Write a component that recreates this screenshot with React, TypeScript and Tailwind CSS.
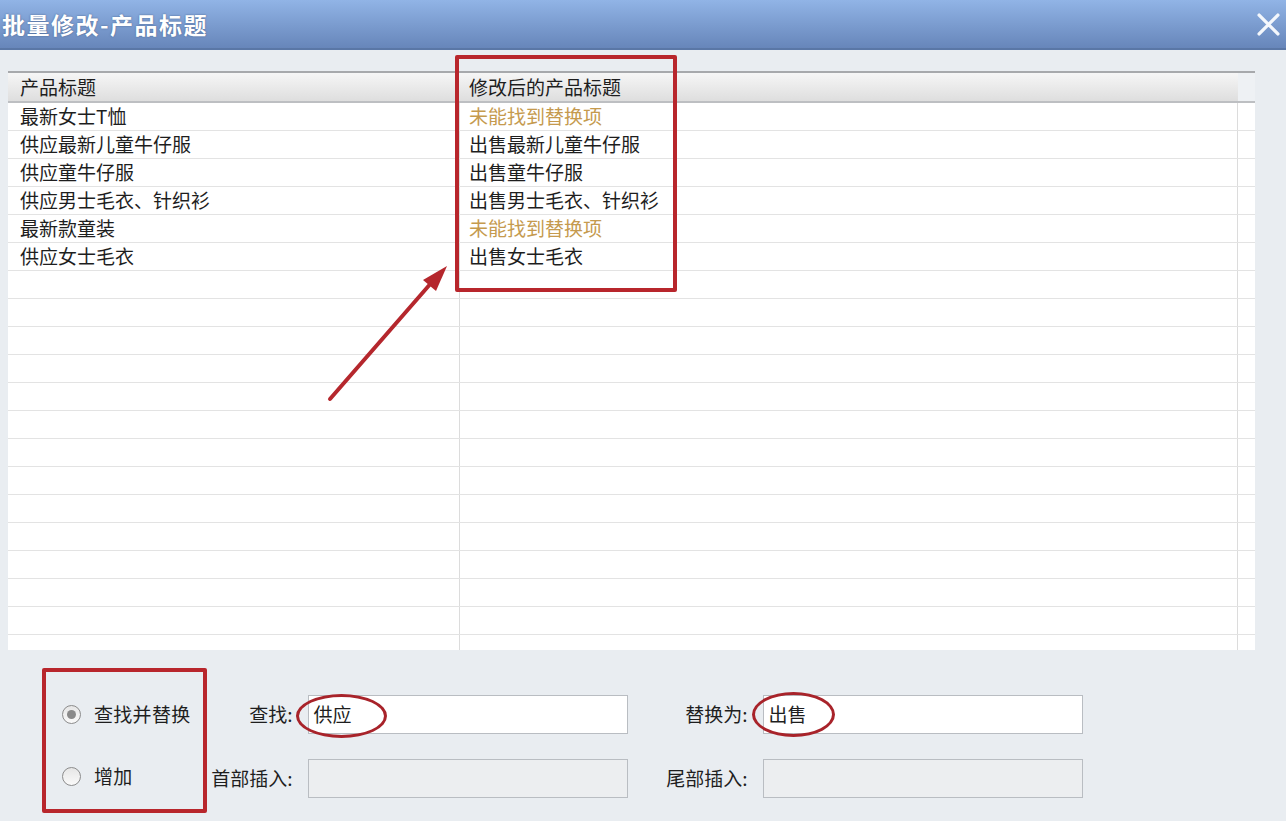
import React from "react";

const font = { fontFamily: '"Noto Sans CJK SC", "Noto Sans", sans-serif' };

const rows: { title: string; result: string; miss?: boolean }[] = [
  { title: "最新女士T恤", result: "未能找到替换项", miss: true },
  { title: "供应最新儿童牛仔服", result: "出售最新儿童牛仔服" },
  { title: "供应童牛仔服", result: "出售童牛仔服" },
  { title: "供应男士毛衣、针织衫", result: "出售男士毛衣、针织衫" },
  { title: "最新款童装", result: "未能找到替换项", miss: true },
  { title: "供应女士毛衣", result: "出售女士毛衣" },
];

const blanks = Array.from({ length: 14 });

const Radio: React.FC<{ checked?: boolean; label: string }> = ({ checked, label }) => (
  <div className="flex items-center gap-[13px] h-[40px]">
    <span className="w-[19px] h-[19px] rounded-full border border-[#8c8c8c] bg-gradient-to-b from-[#e6e6e6] to-[#fafafa] flex items-center justify-center">
      {checked && <span className="w-[9px] h-[9px] rounded-full bg-[#8a8a8a]" />}
    </span>
    <span className="text-[19px] text-[#1e1e1e] tracking-[0.3px]">{label}</span>
  </div>
);

const Field: React.FC<{ label: string; value?: string; disabled?: boolean; labelW: string }> = ({
  label,
  value,
  disabled,
  labelW,
}) => (
  <div className="flex items-center h-[40px]">
    <span className={`${labelW} text-right text-[19px] text-[#1e1e1e] pr-[15px]`}>{label}</span>
    <div
      className={`w-[320px] h-[39px] border border-[#b9bdc2] flex items-center pl-[5px] text-[19px] text-[#1e1e1e] ${
        disabled ? "bg-[#eceef0]" : "bg-white"
      }`}
    >
      {value}
    </div>
  </div>
);

export default function App() {
  return (
    <div className="relative w-[1286px] h-[821px] bg-[#e9edf1] overflow-hidden" style={font}>
      {/* title bar */}
      <div className="h-[50px] bg-gradient-to-b from-[#91b4e6] to-[#6786ba] border-b-2 border-[#5a77a6] flex items-center justify-between pl-[2px] pr-[5px]">
        <span className="text-white font-bold text-[23px] tracking-[1.5px] [text-shadow:0_0_2px_#44608c]">
          批量修改-产品标题
        </span>
        <svg width="25" height="25" viewBox="0 0 24 24">
          <path d="M3 3 L21 21 M21 3 L3 21" stroke="#f4f7fc" strokeWidth="3.2" strokeLinecap="round" />
        </svg>
      </div>

      {/* list */}
      <div className="mt-[21px] ml-[8px] w-[1247px] h-[579px] bg-white flex flex-col">
        <div className="flex h-[32px] border-t-2 border-b-2 border-t-[#a7a9ac] border-b-[#bdbfc2] bg-gradient-to-b from-[#f6f6f6] to-[#dedede]">
          <div className="w-[452px] pl-[12px] flex items-center text-[19px] text-[#1e1e1e]">产品标题</div>
          <div className="w-[778px] pl-[9px] flex items-center text-[19px] text-[#1e1e1e]">修改后的产品标题</div>
          <div className="flex-1 bg-[#eef1f4]" />
        </div>
        <div className="flex-1 overflow-hidden flex flex-col">
          {rows.map((r) => (
            <div key={r.title} className="flex h-[28px] shrink-0 border-b border-[#e3e3e3]">
              <div className="w-[452px] pl-[12px] border-r border-[#dcdcdc] flex items-center text-[19px] text-[#1e1e1e]">
                {r.title}
              </div>
              <div
                className={`w-[778px] pl-[9px] border-r border-[#dcdcdc] flex items-center text-[19px] ${
                  r.miss ? "text-[#c59a4e]" : "text-[#1e1e1e]"
                }`}
              >
                {r.result}
              </div>
              <div className="flex-1" />
            </div>
          ))}
          {blanks.map((_, i) => (
            <div key={i} className="flex h-[28px] shrink-0 border-b border-[#e3e3e3]">
              <div className="w-[452px] border-r border-[#dcdcdc]" />
              <div className="w-[778px] border-r border-[#dcdcdc]" />
              <div className="flex-1" />
            </div>
          ))}
        </div>
      </div>

      {/* options */}
      <div className="flex mt-[44px] ml-[62px] gap-[9px]">
        <div className="flex flex-col gap-[22px]">
          <Radio checked label="查找并替换" />
          <Radio label="增加" />
        </div>
        <div className="flex flex-col gap-[24px]">
          <Field label="查找:" value="供应" labelW="w-[108px]" />
          <Field label="首部插入:" disabled labelW="w-[108px]" />
        </div>
        <div className="flex flex-col gap-[24px]">
          <Field label="替换为:" value="出售" labelW="w-[126px]" />
          <Field label="尾部插入:" disabled labelW="w-[126px]" />
        </div>
      </div>

      {/* annotations */}
      <div className="absolute left-[455px] top-[55px] w-[222px] h-[237px] border-[4px] border-[#b8262c] rounded-[2px]" />
      <div className="absolute left-[42px] top-[668px] w-[165px] h-[145px] border-[4px] border-[#b8262c] rounded-[2px]" />
      <div className="absolute left-[296px] top-[694px] w-[91px] h-[44px] rounded-[50%] border-[3px] border-[#a8232a]" />
      <div className="absolute left-[752px] top-[692px] w-[83px] h-[45px] rounded-[50%] border-[3px] border-[#a8232a]" />
      <svg className="absolute left-0 top-0" width="1286" height="821" pointerEvents="none">
        <line x1="330" y1="399" x2="432" y2="282" stroke="#b5272d" strokeWidth="4" strokeLinecap="round" />
        <polygon points="447,266 423,280 436,291" fill="#b5272d" />
      </svg>
    </div>
  );
}
